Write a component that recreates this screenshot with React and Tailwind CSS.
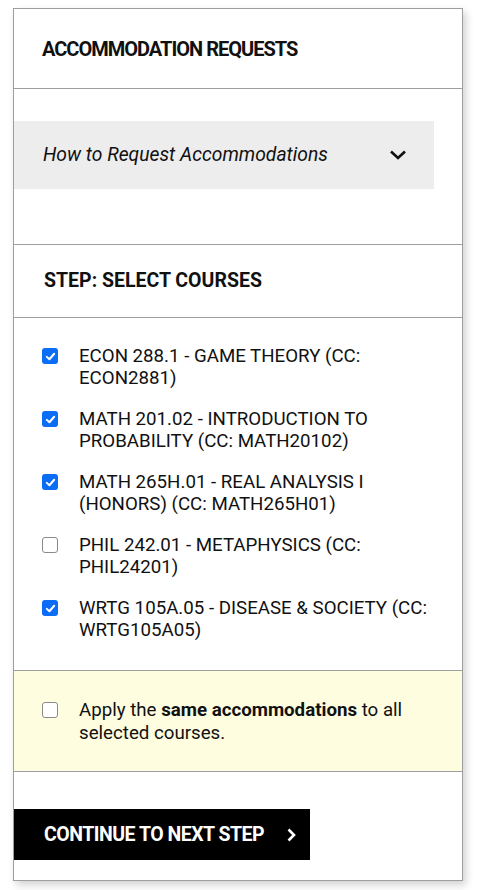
import { useState } from "react";

const courses = [
  { id: "econ", label: "ECON 288.1 - GAME THEORY (CC: ECON2881)", checked: true },
  { id: "math201", label: "MATH 201.02 - INTRODUCTION TO PROBABILITY (CC: MATH20102)", checked: true },
  { id: "math265", label: "MATH 265H.01 - REAL ANALYSIS I (HONORS) (CC: MATH265H01)", checked: true },
  { id: "phil", label: "PHIL 242.01 - METAPHYSICS (CC: PHIL24201)", checked: false },
  { id: "wrtg", label: "WRTG 105A.05 - DISEASE & SOCIETY (CC: WRTG105A05)", checked: true },
];

function Box({ checked, onClick }) {
  return (
    <button
      type="button"
      onClick={onClick}
      className={
        checked
          ? "mt-[3px] w-4 h-4 shrink-0 rounded-[3px] bg-[#0b6cf5] flex items-center justify-center"
          : "mt-[3px] w-4 h-4 shrink-0 rounded-[3px] bg-white border border-[#8a8a8a] flex items-center justify-center"
      }
    >
      {checked && (
        <svg width="11" height="11" viewBox="0 0 12 12" fill="none">
          <path d="M2 6.4 L4.8 9 L10 3" stroke="white" strokeWidth="2.2" strokeLinecap="round" strokeLinejoin="round" />
        </svg>
      )}
    </button>
  );
}

export default function App() {
  const [checked, setChecked] = useState(courses.map((c) => c.checked));
  const [same, setSame] = useState(false);

  return (
    <div className="min-h-screen bg-white pt-2 pl-[13px] pr-[19px] pb-2 font-['Roboto',sans-serif] text-[#111]">
      <div className="border border-[#9e9e9e] bg-white shadow-[3px_4px_8px_rgba(0,0,0,0.18)]">

        {/* Header */}
        <div className="h-[80px] flex items-center px-7 border-b border-[#9e9e9e]">
          <h1 className="text-[20px] font-bold tracking-[-1px] uppercase">Accommodation Requests</h1>
        </div>

        {/* Accordion */}
        <div className="pt-8 pb-[55px] pr-7 border-b border-[#9e9e9e]">
          <div className="h-[68px] bg-[#ededed] flex items-center justify-between pl-[29px] pr-[27px]">
            <span className="italic text-[19.3px]">How to Request Accommodations</span>
            <svg width="18" height="12" viewBox="0 0 18 12" fill="none">
              <path d="M2 2.5 L9 9 L16 2.5" stroke="#111" strokeWidth="2.6" />
            </svg>
          </div>
        </div>

        {/* Step title */}
        <div className="h-[73px] flex items-center px-[30px] border-b border-[#9e9e9e]">
          <h2 className="text-[19.5px] font-bold">STEP: SELECT COURSES</h2>
        </div>

        {/* Courses */}
        <div className="pt-[27px] pb-[29px] px-7 flex flex-col gap-[19px] border-b border-[#9e9e9e]">
          {courses.map((c, i) => (
            <label key={c.id} className="flex gap-[21px] text-[18.7px] leading-[22px]">
              <Box
                checked={checked[i]}
                onClick={() => setChecked(checked.map((v, j) => (j === i ? !v : v)))}
              />
              <span>{c.label}</span>
            </label>
          ))}
        </div>

        {/* Same accommodations */}
        <div className="bg-[#fefde0] pt-7 pb-[26px] px-7 border-b border-[#9e9e9e]">
          <label className="flex gap-[21px] text-[18.7px] leading-[23px]">
            <Box checked={same} onClick={() => setSame(!same)} />
            <span>
              Apply the <b className="font-bold">same accommodations</b> to all selected courses.
            </span>
          </label>
        </div>

        {/* Continue */}
        <div className="pt-[37px] pb-5">
          <button className="h-[51px] w-[296px] bg-black text-white flex items-center pl-[30px] gap-[21px]">
            <span className="text-[19.5px] font-bold tracking-[-0.5px]">CONTINUE TO NEXT STEP</span>
            <svg width="12" height="16" viewBox="0 0 12 16" fill="none">
              <path d="M3.5 2.5 L9 8 L3.5 13.5" stroke="white" strokeWidth="2.6" />
            </svg>
          </button>
        </div>
      </div>
    </div>
  );
}
